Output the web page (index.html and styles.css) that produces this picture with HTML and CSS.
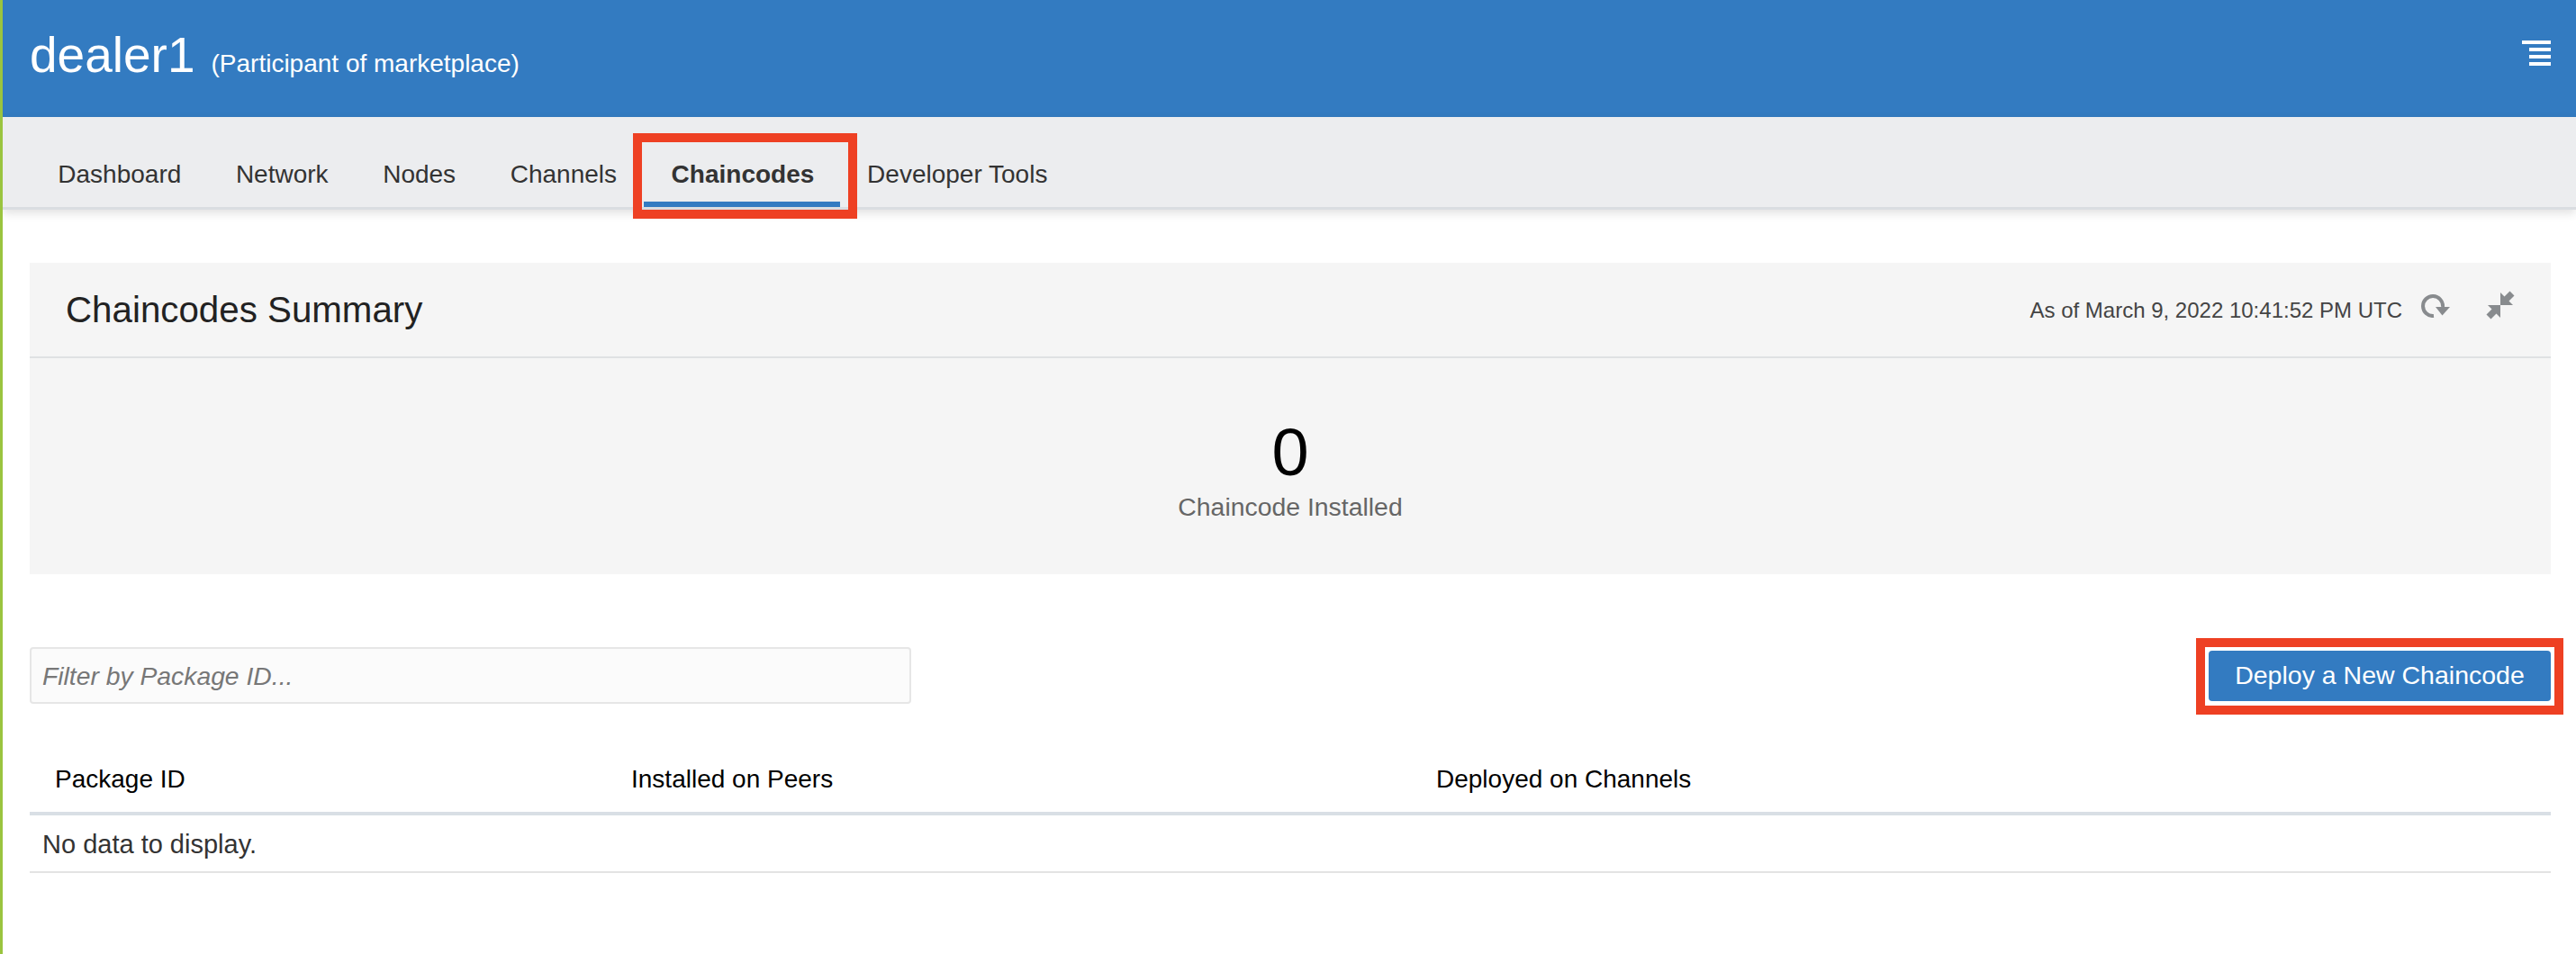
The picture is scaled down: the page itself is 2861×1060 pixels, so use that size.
FILE: index.html

```html
<!DOCTYPE html>
<html lang="en">
<head>
    <meta charset="UTF-8">
    <meta name="viewport" content="width=device-width, initial-scale=1.0">
    <title>Chaincodes</title>
    <link rel="stylesheet" href="styles.css">
</head>
<body>
    <div class="page">
        <header class="topbar">
            <div class="brand">
                <span class="brand-name">dealer1</span>
                <span class="brand-role">(Participant of marketplace)</span>
            </div>
            <div class="menu-icon" aria-label="Menu">
                <span class="menu-line menu-line-long"></span>
                <span class="menu-line"></span>
                <span class="menu-line"></span>
                <span class="menu-line"></span>
            </div>
        </header>

        <nav class="tabs">
            <a class="tab">Dashboard</a>
            <a class="tab">Network</a>
            <a class="tab">Nodes</a>
            <a class="tab">Channels</a>
            <a class="tab tab-active">Chaincodes</a>
            <a class="tab">Developer Tools</a>
        </nav>

        <main class="content">
            <section class="summary">
                <div class="summary-head">
                    <h1 class="summary-title">Chaincodes Summary</h1>
                    <div class="summary-tools">
                        <span class="timestamp">As of March 9, 2022 10:41:52 PM UTC</span>
                        <svg class="icon-refresh" width="32" height="26" viewBox="0 0 32 26">
                            <path d="M24 14A11 11 0 1 0 14 24" fill="none" stroke="#888b8e" stroke-width="4"/>
                            <polygon points="16,14 32,14 23.5,23.5" fill="#888b8e"/>
                        </svg>
                        <svg class="icon-compress" width="32" height="32" viewBox="0 0 32 32">
                            <polygon points="16,2 16,16 30,16" fill="#888b8e"/>
                            <line x1="21" y1="11" x2="29" y2="3" stroke="#888b8e" stroke-width="7"/>
                            <polygon points="16,30 16,16 2,16" fill="#888b8e"/>
                            <line x1="11" y1="21" x2="3" y2="29" stroke="#888b8e" stroke-width="7"/>
                        </svg>
                    </div>
                </div>
                <div class="summary-body">
                    <div class="summary-count">0</div>
                    <div class="summary-label">Chaincode Installed</div>
                </div>
            </section>

            <div class="toolbar">
                <input class="filter" type="text" placeholder="Filter by Package ID...">
                <button class="deploy" type="button">Deploy a New Chaincode</button>
            </div>

            <table class="grid">
                <thead>
                    <tr>
                        <th class="col-package">Package ID</th>
                        <th class="col-peers">Installed on Peers</th>
                        <th>Deployed on Channels</th>
                    </tr>
                </thead>
                <tbody>
                    <tr>
                        <td colspan="3">No data to display.</td>
                    </tr>
                </tbody>
            </table>
        </main>
    </div>
</body>
</html>
```

FILE: styles.css

```css
*, *::after {
    box-sizing: border-box;
}
body {
    margin: 0;
    font-family: "Liberation Sans", Arial, sans-serif;
    background: #fff;
    color: #333;
}
.page {
    height: 1060px;
    border-left: 3px solid #9ac43f;
    overflow: hidden;
}

/* top blue bar */
.topbar {
    height: 130px;
    background: #337bc1;
    color: #fff;
    display: flex;
    justify-content: space-between;
    align-items: flex-start;
    padding: 0 28px 0 30px;
}
.brand {
    display: flex;
    align-items: baseline;
    gap: 18px;
    padding-top: 31px;
}
.brand-name {
    font-size: 55px;
    line-height: 60px;
}
.brand-role {
    font-size: 28px;
}
.menu-icon {
    display: flex;
    flex-direction: column;
    align-items: flex-end;
    gap: 4px;
    padding-top: 45px;
}
.menu-line {
    display: block;
    width: 24px;
    height: 4px;
    background: #fff;
}
.menu-line-long {
    width: 32px;
}

/* tabs */
.tabs {
    height: 103px;
    background: #ecedef;
    border-bottom: 3px solid #dadde1;
    box-shadow: 0 4px 10px rgba(0, 0, 0, 0.12);
    display: flex;
    padding: 0 0 0 31px;
    position: relative;
}
.tab {
    position: relative;
    padding: 44px 30.3px 0;
    font-size: 28px;
    line-height: 40px;
    color: #333;
}
.tab-active {
    font-weight: bold;
    border-bottom: 6px solid #337bc1;
    height: 100px;
    padding-right: 28.5px;
}
/* red annotation box */
.tab-active::after {
    content: "";
    position: absolute;
    left: -12px;
    right: -19px;
    top: 18px;
    height: 95px;
    border: 10px solid #ee4023;
}

.content {
    padding: 59px 28px 0 30px;
}

/* summary panel */
.summary {
    height: 346px;
    background: #f5f5f5;
}
.summary-head {
    height: 106px;
    border-bottom: 2px solid #dfe1e3;
    display: flex;
    justify-content: space-between;
    align-items: center;
    padding: 2px 28px 0 40px;
}
.summary-title {
    margin: 0;
    font-size: 40.3px;
    font-weight: normal;
    color: #222;
}
.summary-tools {
    display: flex;
    align-items: center;
}
.timestamp {
    font-size: 24px;
    color: #444;
}
.icon-refresh {
    margin: -10px 0 0 21px;
}
.icon-compress {
    margin: -12px 12px 0 40px;
}
.summary-body {
    text-align: center;
    padding-top: 62px;
}
.summary-count {
    font-size: 74px;
    line-height: 86px;
    color: #000;
}
.summary-label {
    font-size: 28.4px;
    line-height: 34px;
    color: #666;
}

/* filter row */
.toolbar {
    display: flex;
    justify-content: space-between;
    align-items: center;
    margin-top: 81px;
}
.filter {
    width: 979px;
    height: 63px;
    padding: 2px 12px 0;
    background: #fbfbfb;
    border: 2px solid #e6e6e6;
    border-radius: 4px;
    font-family: "Liberation Sans", Arial, sans-serif;
    font-size: 28.3px;
    font-style: italic;
}
.filter::placeholder {
    color: #777;
    opacity: 1;
}
.deploy {
    position: relative;
    width: 380px;
    height: 56px;
    background: #337bc1;
    color: #fff;
    border: none;
    border-radius: 4px;
    font-family: "Liberation Sans", Arial, sans-serif;
    font-size: 28.5px;
    padding: 0;
}
.deploy::after {
    content: "";
    position: absolute;
    left: -14px;
    right: -14px;
    top: -14px;
    bottom: -15px;
    border: 10px solid #ee4023;
}

/* table */
.grid {
    width: 100%;
    margin-top: 24px;
    border-collapse: collapse;
    table-layout: fixed;
    font-size: 28px;
}
.grid th {
    height: 98px;
    padding: 24px 0 0 28px;
    text-align: left;
    font-weight: normal;
    color: #000;
    border-bottom: 4px solid #d9dfe5;
}
.col-package {
    width: 640px;
}
.col-peers {
    width: 894px;
}
.grid td {
    height: 65px;
    padding: 2px 0 0 14px;
    font-size: 29px;
    border-bottom: 2px solid #e3e3e3;
}
```
